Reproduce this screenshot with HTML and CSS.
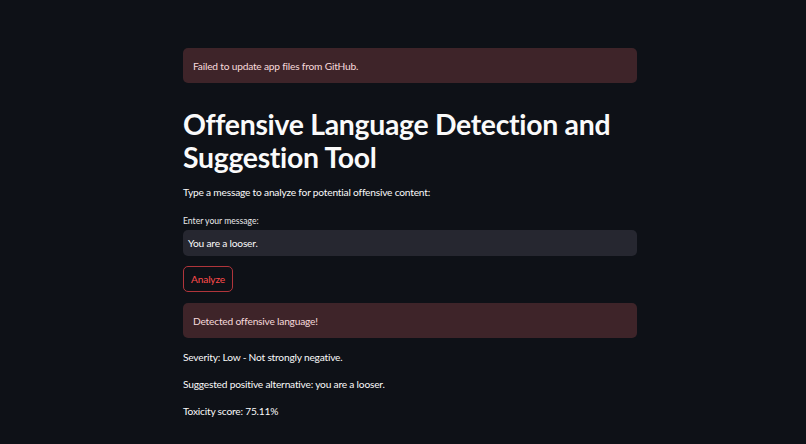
FILE: index.html
```html
<!DOCTYPE html>
<html>
<head>
<meta charset="utf-8">
<link rel="stylesheet" href="styles.css">
</head>
<body>
<main class="main">
  <div class="alert">Failed to update app files from GitHub.</div>
  <h1 class="title">Offensive Language Detection and Suggestion Tool</h1>
  <p class="intro">Type a message to analyze for potential offensive content:</p>
  <label class="label">Enter your message:</label>
  <div class="input">You are a looser.</div>
  <div class="btn-row"><button class="btn">Analyze</button></div>
  <div class="alert alert-2">Detected offensive language!</div>
  <p class="line">Severity: Low - Not strongly negative.</p>
  <p class="line">Suggested positive alternative: you are a looser.</p>
  <p class="line">Toxicity score: 75.11%</p>
</main>
</body>
</html>
```
FILE: styles.css
```css
html, body {
  margin: 0;
  padding: 0;
  background: #0e1117;
  height: 100%;
}
body {
  font-family: "Lato", "Noto Sans", sans-serif;
  color: #fafafa;
  overflow: hidden;
  padding-left: 14px;
  box-sizing: border-box;
}
.main {
  width: 454px;
  margin: 0 auto;
  padding-top: 48px;
  display: flex;
  flex-direction: column;
  align-items: stretch;
}
.alert {
  height: 35px;
  box-sizing: border-box;
  padding: 0 10px;
  display: flex;
  align-items: center;
  background: #3e2429;
  color: #f7dadc;
  border-radius: 5px;
  font-size: 10.2px;
  letter-spacing: -0.2px;
}
.title {
  margin: 25px 0 0;
  font-size: 28.4px;
  line-height: 33px;
  font-weight: 700;
  letter-spacing: -0.3px;
  color: #fafafa;
}
.intro {
  margin: 10px 0 0;
  font-size: 10.2px;
  letter-spacing: -0.2px;
  line-height: 16px;
}
.label {
  margin-top: 15px;
  font-size: 8.6px;
  line-height: 12px;
  color: #e8e8ea;
}
.input {
  margin-top: 3px;
  height: 26px;
  box-sizing: border-box;
  background: #262730;
  border-radius: 5px;
  padding: 0 5px;
  display: flex;
  align-items: center;
  font-size: 10.2px;
  letter-spacing: -0.2px;
  color: #fafafa;
}
.btn-row {
  margin-top: 10px;
  display: flex;
}
.btn {
  height: 26px;
  width: 50px;
  padding: 0;
  background: transparent;
  border: 1px solid #b0353b;
  border-radius: 5px;
  color: #ff4b4b;
  font-family: inherit;
  font-size: 10.2px;
  letter-spacing: -0.2px;
}
.alert-2 {
  margin-top: 11px;
}
.line {
  margin: 11px 0 0;
  font-size: 10.2px;
  letter-spacing: -0.2px;
  line-height: 16px;
}
.line + .line {
  margin-top: 11px;
}
```
